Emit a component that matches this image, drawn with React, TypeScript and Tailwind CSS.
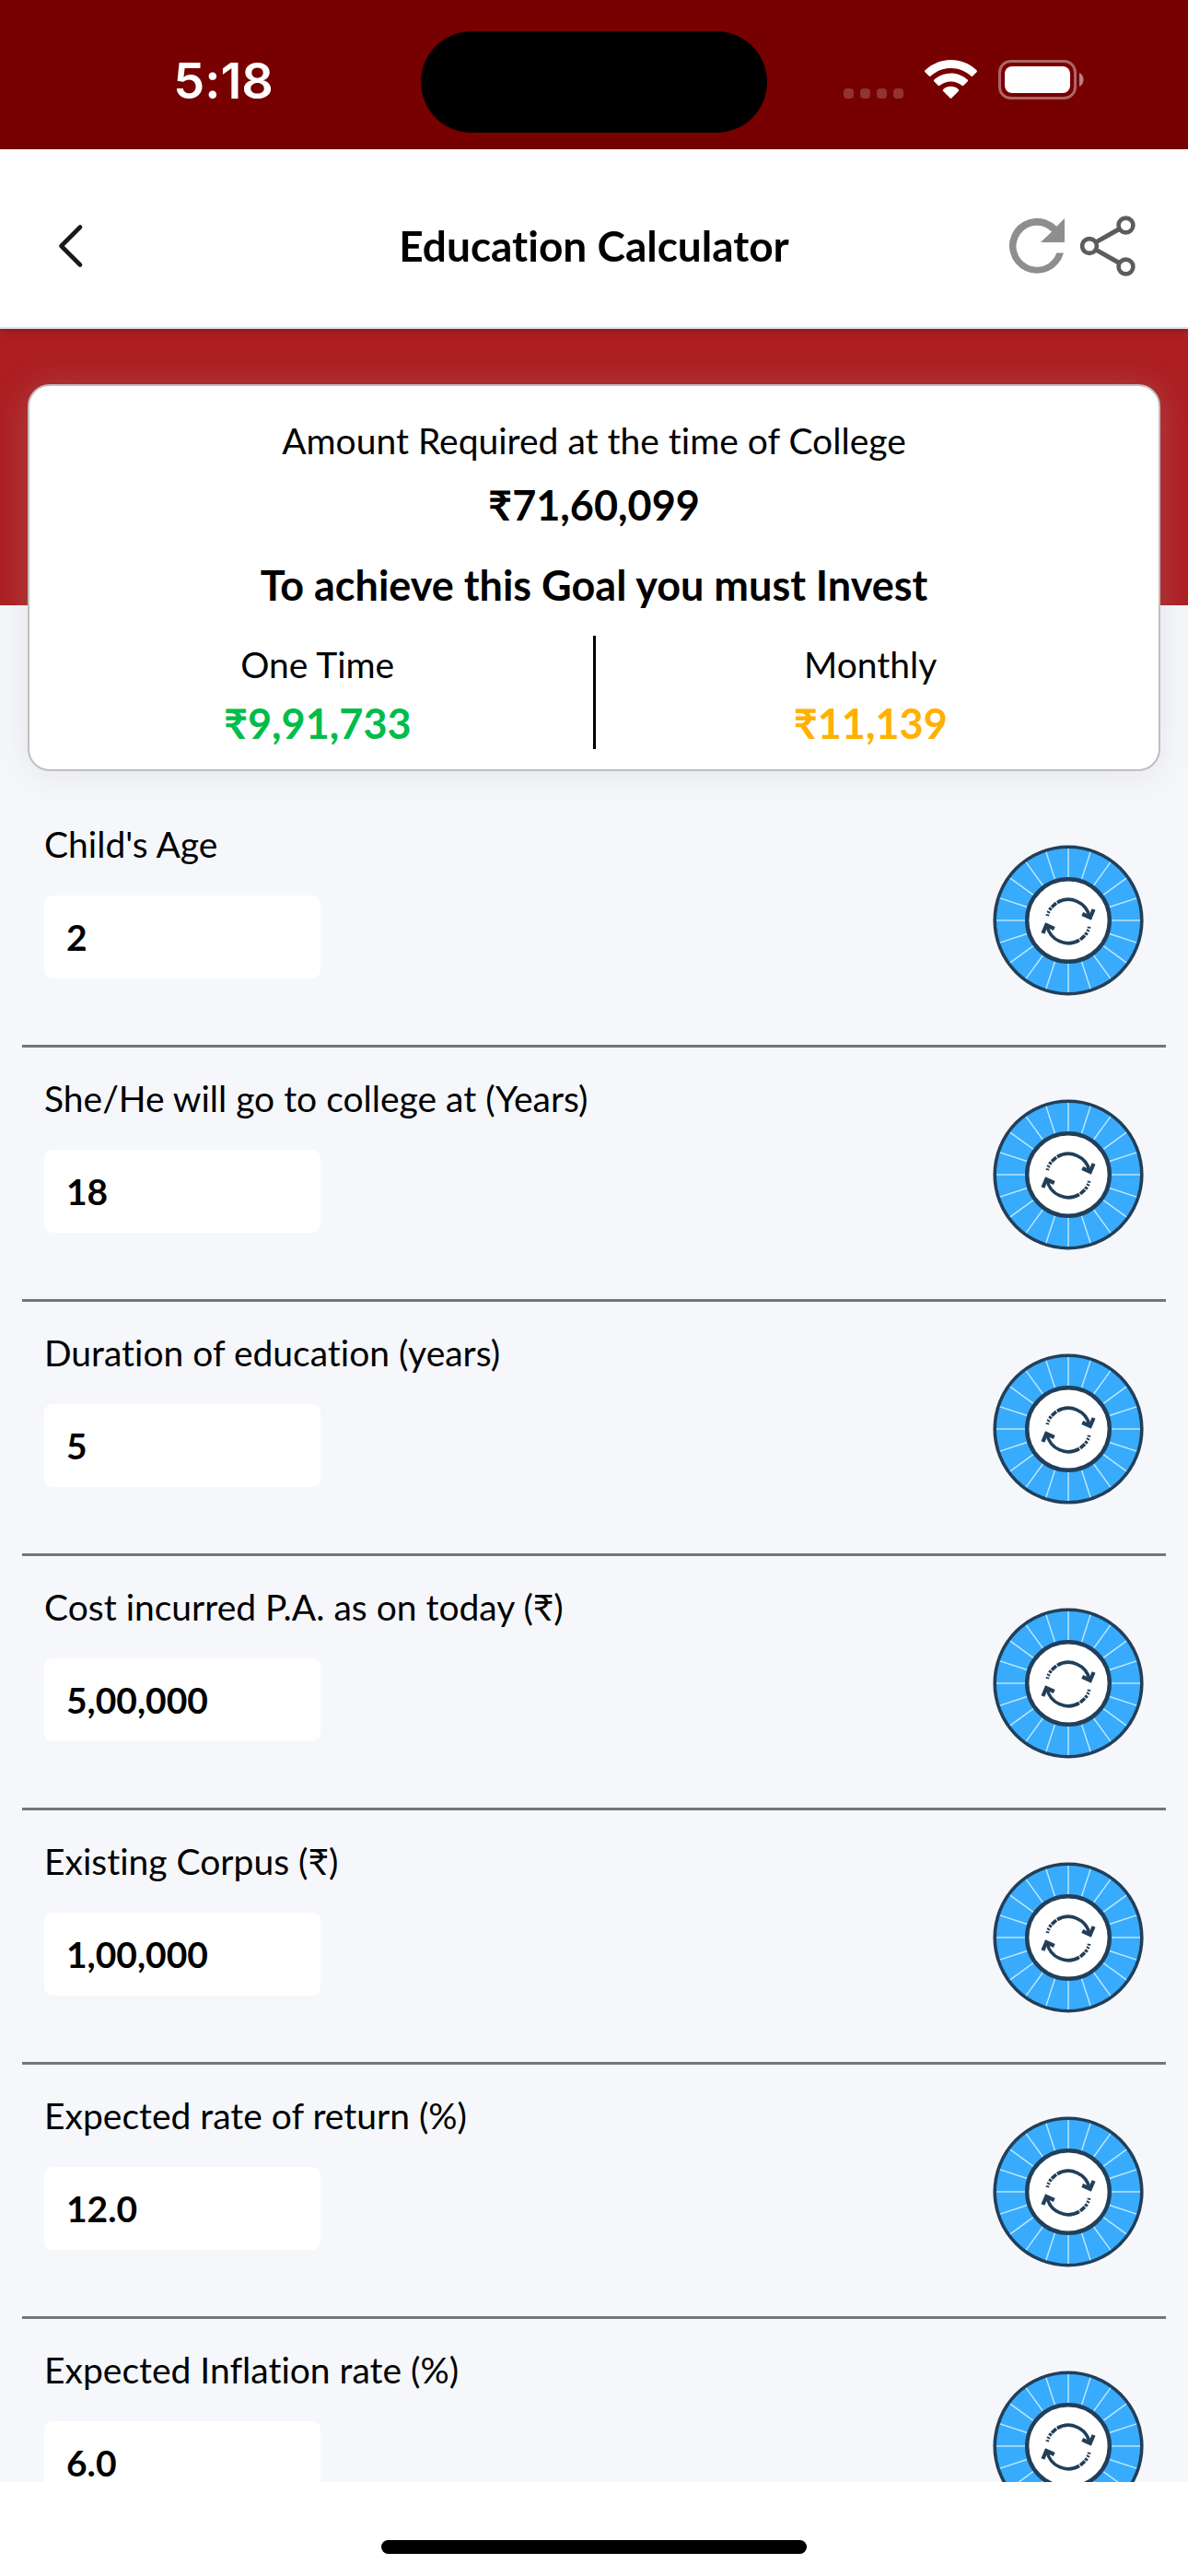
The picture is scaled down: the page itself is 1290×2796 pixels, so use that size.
import React, { useState } from "react";

interface Field {
  id: string;
  label: string;
  value: string;
}

const FIELDS: Field[] = [
  { id: "child-age", label: "Child's Age", value: "2" },
  { id: "college-age", label: "She/He will go to college at (Years)", value: "18" },
  { id: "duration", label: "Duration of education (years)", value: "5" },
  { id: "cost", label: "Cost incurred P.A. as on today (₹)", value: "5,00,000" },
  { id: "corpus", label: "Existing Corpus (₹)", value: "1,00,000" },
  { id: "return-rate", label: "Expected rate of return (%)", value: "12.0" },
  { id: "inflation-rate", label: "Expected Inflation rate (%)", value: "6.0" },
];

const SPOKES = Array.from({ length: 20 }, (_, i) => i * 18);

function StatusBar() {
  return (
    <div className="grid h-[162px] shrink-0 grid-cols-[1fr_376px_1fr] bg-[#770000] pt-[34px]">
      <div className="pl-[28px] text-center font-['Inter',sans-serif] text-[54px] leading-[108px] font-semibold text-white">
        5:18
      </div>
      <div className="h-[110px] rounded-full bg-black" />
      <div className="flex items-start gap-[23px] pt-[31px] pl-[83px]">
        <div className="flex gap-[7px] pt-[31px]">
          {[0, 1, 2, 3].map((dot) => (
            <span key={dot} className="size-[11px] rounded-[4px] bg-white/20" />
          ))}
        </div>
        <svg width="57" height="43" viewBox="0 0 57 43" fill="#fff" aria-hidden="true">
          <path d="M28.5 0C39.3 0 49.2 4.2 56.5 11.2Q57.4 12.2 56.5 13.2L52.3 17.5Q51.3 18.4 50.3 17.5C44.5 12.2 36.9 9 28.5 9S12.5 12.2 6.7 17.5Q5.7 18.4 4.7 17.5L.5 13.2Q-.4 12.2 .5 11.2C7.8 4.2 17.7 0 28.5 0Z" />
          <path d="M28.5 14.5C35.5 14.5 41.8 17.2 46.6 21.5Q47.6 22.5 46.6 23.5L42.3 27.8Q41.4 28.7 40.4 27.8C37.2 25 33.1 23.4 28.5 23.4S19.8 25 16.6 27.8Q15.6 28.7 14.7 27.8L10.4 23.5Q9.4 22.5 10.4 21.5C15.2 17.2 21.5 14.5 28.5 14.5Z" />
          <path d="M28.5 28.8C31.7 28.8 34.6 30 36.8 31.9Q37.8 32.9 36.8 33.9L29.5 41.3Q28.5 42.3 27.5 41.3L20.2 33.9Q19.2 32.9 20.2 31.9C22.4 30 25.3 28.8 28.5 28.8Z" />
        </svg>
        <svg width="94" height="43" viewBox="0 0 94 43" fill="none" aria-hidden="true">
          <rect x="1.5" y="1.5" width="82" height="40" rx="12" stroke="#fff" strokeOpacity=".4" strokeWidth="3" />
          <rect x="7" y="7" width="71" height="29" rx="8" fill="#fff" />
          <path d="M88 14C94 16.5 94 26.5 88 29Z" fill="#fff" fillOpacity=".5" />
        </svg>
      </div>
    </div>
  );
}

function Header() {
  return (
    <header className="relative z-10 grid h-[195px] shrink-0 grid-cols-[1fr_auto_1fr] items-center border-b-2 border-[#dde1e4] bg-white px-[54px] pt-[16px] shadow-[0_2px_10px_-2px_rgba(0,0,0,0.35)]">
      <button type="button" aria-label="Back" className="w-[48px] cursor-pointer">
        <svg width="48" height="60" viewBox="0 0 48 60" fill="none" stroke="#1a1a1a" strokeWidth="4.6" strokeLinecap="round" strokeLinejoin="round">
          <path d="M33 9.5L12.5 30L33 50.5" />
        </svg>
      </button>
      <h1 className="text-[46px] leading-[56px] font-bold">Education Calculator</h1>
      <div className="flex items-center justify-end gap-[15px] pr-[3px]">
        <button type="button" aria-label="Reset" className="cursor-pointer">
          <svg width="62" height="66" viewBox="0 0 62 66" fill="#8e8e8e">
            <path d="M60 3V29H34L46 17.5A22.5 22.5 0 1 0 51.3 40.5H59A30 30 0 1 1 51.3 11.7Z" />
          </svg>
        </button>
        <button type="button" aria-label="Share" className="cursor-pointer">
          <svg width="60" height="66" viewBox="0 0 60 66" fill="none" stroke="#5c5c5c" strokeWidth="4.6">
            <path d="M17.5 28.7L42.5 14.5M17.5 37.3L42.5 51.5" strokeWidth="5" />
            <circle cx="10" cy="33" r="7.9" />
            <circle cx="49.5" cy="10.5" r="7.9" />
            <circle cx="49.5" cy="55.5" r="7.9" />
          </svg>
        </button>
      </div>
    </header>
  );
}

function SummaryCard() {
  return (
    <section className="relative mx-[30px] -mt-[240px] rounded-[24px] border-2 border-[#bfbfbf] bg-white px-[14px] pt-[35px] pb-[22px] text-center shadow-[0_4px_36px_rgba(185,185,175,0.25)]">
      <p className="text-[39px] leading-[48px]">Amount Required at the time of College</p>
      <p className="mt-[18px] text-[45px] leading-[56px] font-bold">₹71,60,099</p>
      <h2 className="mt-[31px] text-[45px] leading-[56px] font-bold">To achieve this Goal you must Invest</h2>
      <div className="mt-[27px] grid grid-cols-[1fr_3px_1fr]">
        <div className="pt-[7px]">
          <p className="text-[39px] leading-[48px]">One Time</p>
          <p className="mt-[12px] text-[45px] leading-[56px] font-bold text-[#00bc4b]">₹9,91,733</p>
        </div>
        <div className="bg-black" />
        <div className="pt-[7px]">
          <p className="text-[39px] leading-[48px]">Monthly</p>
          <p className="mt-[12px] text-[45px] leading-[56px] font-bold text-[#ffb000]">₹11,139</p>
        </div>
      </div>
    </section>
  );
}

function Wheel() {
  return (
    <svg width="164" height="164" viewBox="-82 -82 164 164" fill="none" aria-hidden="true">
      <circle r="79.8" fill="#38abfd" stroke="#223f59" strokeWidth="3.6" />
      {SPOKES.map((angle) => (
        <path key={angle} d="M0 -47V-78" stroke="#bfe8ff" strokeWidth="1.4" transform={`rotate(${angle})`} />
      ))}
      <circle r="44.8" fill="#fff" stroke="#223f59" strokeWidth="4.4" />
      {/* the lower arrow is the upper one turned round */}
      {[0, 180].map((turn) => (
        <g key={turn} transform={`translate(0 1) rotate(${turn})`} stroke="#223f59" strokeWidth="3.6">
          <path d="M-12 -20.4A23.5 23.5 0 0 1 23 -5" />
          <path d="M-13 -19.8L-18 -15.3" />
          <path d="M-18.6 -14.7L-20.4 -12.3M-21 -10.9L-21.9 -9.1M-22.3 -7.6L-22.7 -5.8" />
          <path d="M15.2 -8L23.8 -4L27.6 -13" strokeWidth="4.2" />
        </g>
      ))}
    </svg>
  );
}

interface FieldRowProps {
  field: Field;
  value: string;
  onChange: (id: string, value: string) => void;
}

function FieldRow({ field, value, onChange }: FieldRowProps) {
  return (
    <div className="flex items-center justify-between border-b-3 border-[#757578] px-[24px]">
      <div className="flex flex-col items-start gap-[32px] pt-[31px] pb-[72px]">
        <label htmlFor={field.id} className="text-[39px] leading-[48px]">
          {field.label}
        </label>
        <input
          id={field.id}
          type="text"
          inputMode="decimal"
          value={value}
          onChange={(e) => onChange(field.id, e.target.value)}
          className="h-[90px] w-[300px] rounded-[9px] bg-white px-[24px] text-[39px] leading-[48px] font-bold outline-none"
        />
      </div>
      <button type="button" aria-label={`Adjust ${field.label}`} className="shrink-0 cursor-pointer pt-[3px]">
        <Wheel />
      </button>
    </div>
  );
}

export default function App() {
  const [values, setValues] = useState<Record<string, string>>(
    Object.fromEntries(FIELDS.map((f) => [f.id, f.value]))
  );

  const handleChange = (id: string, value: string) => {
    setValues((prev) => ({ ...prev, [id]: value }));
  };

  return (
    <div className="flex h-screen flex-col bg-white font-['Lato',sans-serif] text-black [font-variant-ligatures:none]">
      <StatusBar />
      <Header />

      <main className="min-h-0 flex-1 overflow-y-auto bg-[#f5f7fb] [scrollbar-width:none]">
        <div className="h-[300px] bg-[#ad1f23]" />
        <SummaryCard />
        <form className="mx-[24px] mt-[24px]">
          {FIELDS.map((field) => (
            <FieldRow key={field.id} field={field} value={values[field.id]} onChange={handleChange} />
          ))}
        </form>
      </main>

      {/* Home indicator */}
      <div className="flex h-[102px] shrink-0 justify-center pt-[63px]">
        <div className="h-[15px] w-[462px] rounded-full bg-black" />
      </div>
    </div>
  );
}
